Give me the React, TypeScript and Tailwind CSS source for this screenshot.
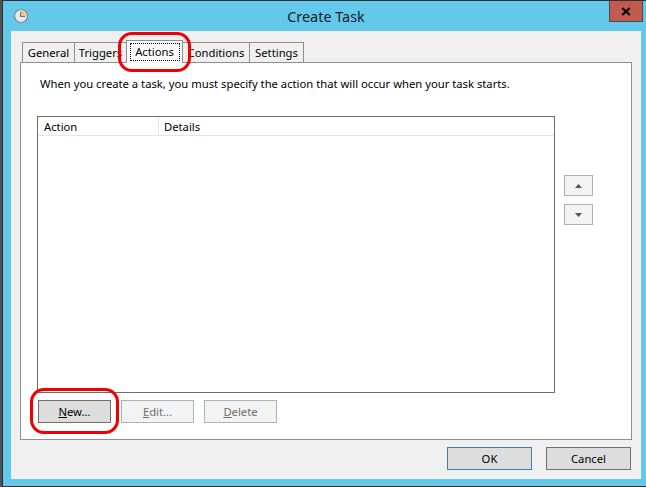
function Tab({ label, active, w }: { label: string; active?: boolean; w: string }) {
  if (active) {
    return (
      <div className={`-mb-px relative z-10 flex h-[23px] items-start justify-center border border-b-0 border-[#8e8f94] bg-white px-[2px] pt-[2px] ${w}`}>
        <span className="flex h-[18px] w-[50px] items-center justify-center outline-1 -outline-offset-1 outline-dotted outline-black">
          {label}
        </span>
      </div>
    );
  }
  return (
    <div className={`flex h-[20px] items-center justify-center border border-b-0 border-[#8e8f94] bg-[#f0f0f0] pt-[1px] ${w}`}>
      {label}
    </div>
  );
}

function Btn({ children, className }: { children: React.ReactNode; className: string }) {
  return <div className={`flex h-[23px] items-center justify-center border ${className}`}>{children}</div>;
}

export default function App() {
  return (
    <div className="relative h-[487px] w-[646px] overflow-hidden bg-[#4d5154] pl-[2px] font-['Noto_Sans',sans-serif] text-[11.25px] leading-[16px] text-black">
      <div className="flex h-[487px] w-[660px] flex-col border border-[#2d3236] bg-[#63c8ea]">
        {/* title bar */}
        <div className="relative flex h-[30px] w-[644px] shrink-0 items-center justify-center pr-[6px]">
          <svg className="absolute left-[10px] top-[7px]" width="16" height="16" viewBox="0 0 16 16">
            <circle cx="8" cy="8" r="6.5" fill="#e6e9ea" stroke="#7f8789" strokeWidth="1.2" />
            <path d="M8 3V8H13A5 5 0 0 0 8 3Z" fill="#f2c576" />
            <path d="M7.5 3.5V8.5H12" fill="none" stroke="#6f7678" strokeWidth="1" />
          </svg>
          <span className="pl-[8px] pt-[1px] text-[14.4px] leading-[20px] text-[#14202b]">Create Task</span>
          <div className="absolute left-[606px] top-0 flex h-[21px] w-[34px] items-center justify-center border border-t-0 border-[#4a4a4a] bg-[#c25a4f]">
            <svg width="10" height="9" viewBox="0 0 10 9">
              <path d="M1.2 1L8.8 8M8.8 1L1.2 8" stroke="#000" strokeWidth="2.2" />
            </svg>
          </div>
        </div>
        {/* client */}
        <div className="ml-[8px] flex h-[448px] w-[630px] shrink-0 flex-col bg-[#f0f0f0] pl-[9px] pt-[9px]">
          <div className="flex h-[22px] items-end pl-[2px]">
            <Tab label="General" w="w-[53px]" />
            <Tab label="Triggers" w="w-[53px] -ml-px" />
            <Tab label="Actions" active w="w-[57px] -ml-px" />
            <Tab label="Conditions" w="w-[68px] -ml-px" />
            <Tab label="Settings" w="w-[55px] -ml-px" />
          </div>
          <div className="flex h-[378px] w-[612px] flex-col border border-[#8e8f94] bg-white pl-[16px]">
            <p className="mt-[13px] h-[16px] pl-[3px] whitespace-nowrap">
              When you create a task, you must specify the action that will occur when your task starts.
            </p>
            <div className="mt-[24px] flex h-[277px] gap-[9px]">
              <div className="w-[518px] border border-[#6d6d6d]">
                <div className="flex h-[19px] items-end border-b border-[#e5e5e5]">
                  <div className="h-[18px] w-[121px] border-r border-[#e5e5e5] pl-[6px] pt-[2px]">Action</div>
                  <div className="h-[18px] pl-[5px] pt-[2px]">Details</div>
                </div>
              </div>
              <div className="flex flex-col gap-[8px] pt-[59px]">
                <div className="flex h-[21px] w-[29px] items-center justify-center border border-[#adb2b5] bg-[#f3f3f3]">
                  <svg width="7" height="4" viewBox="0 0 7 4"><path d="M3.5 0L7 4H0Z" fill="#555" /></svg>
                </div>
                <div className="flex h-[21px] w-[29px] items-center justify-center border border-[#adb2b5] bg-[#f3f3f3]">
                  <svg width="7" height="4" viewBox="0 0 7 4"><path d="M0 0H7L3.5 4Z" fill="#555" /></svg>
                </div>
              </div>
            </div>
            <div className="mt-[7px] flex gap-[10px] pl-[1px]">
              <Btn className="w-[73px] border-[#707070] bg-[#dddddd]">
                <span><u>N</u>ew...</span>
              </Btn>
              <Btn className="w-[73px] border-[#adb2b5] bg-[#f3f3f3] text-[#6d6d6d]">
                <span><u>E</u>dit...</span>
              </Btn>
              <Btn className="w-[73px] border-[#adb2b5] bg-[#f3f3f3] text-[#6d6d6d]">
                <span><u>D</u>elete</span>
              </Btn>
            </div>
          </div>
          <div className="mt-[7px] flex w-[612px] justify-end gap-[14px] pr-[1px]">
            <Btn className="w-[85px] border-[#3c7fb1] bg-[#dddddd]">OK</Btn>
            <Btn className="w-[85px] border-[#707070] bg-[#dddddd]">Cancel</Btn>
          </div>
        </div>
      </div>
      {/* red annotations */}
      <div className="absolute left-[118px] top-[32px] h-[40px] w-[73px] rounded-[14px] border-[3px] border-[#f00000]" />
      <div className="absolute left-[30px] top-[388px] h-[46px] w-[89px] rounded-[14px] border-[3px] border-[#f00000]" />
    </div>
  );
}
